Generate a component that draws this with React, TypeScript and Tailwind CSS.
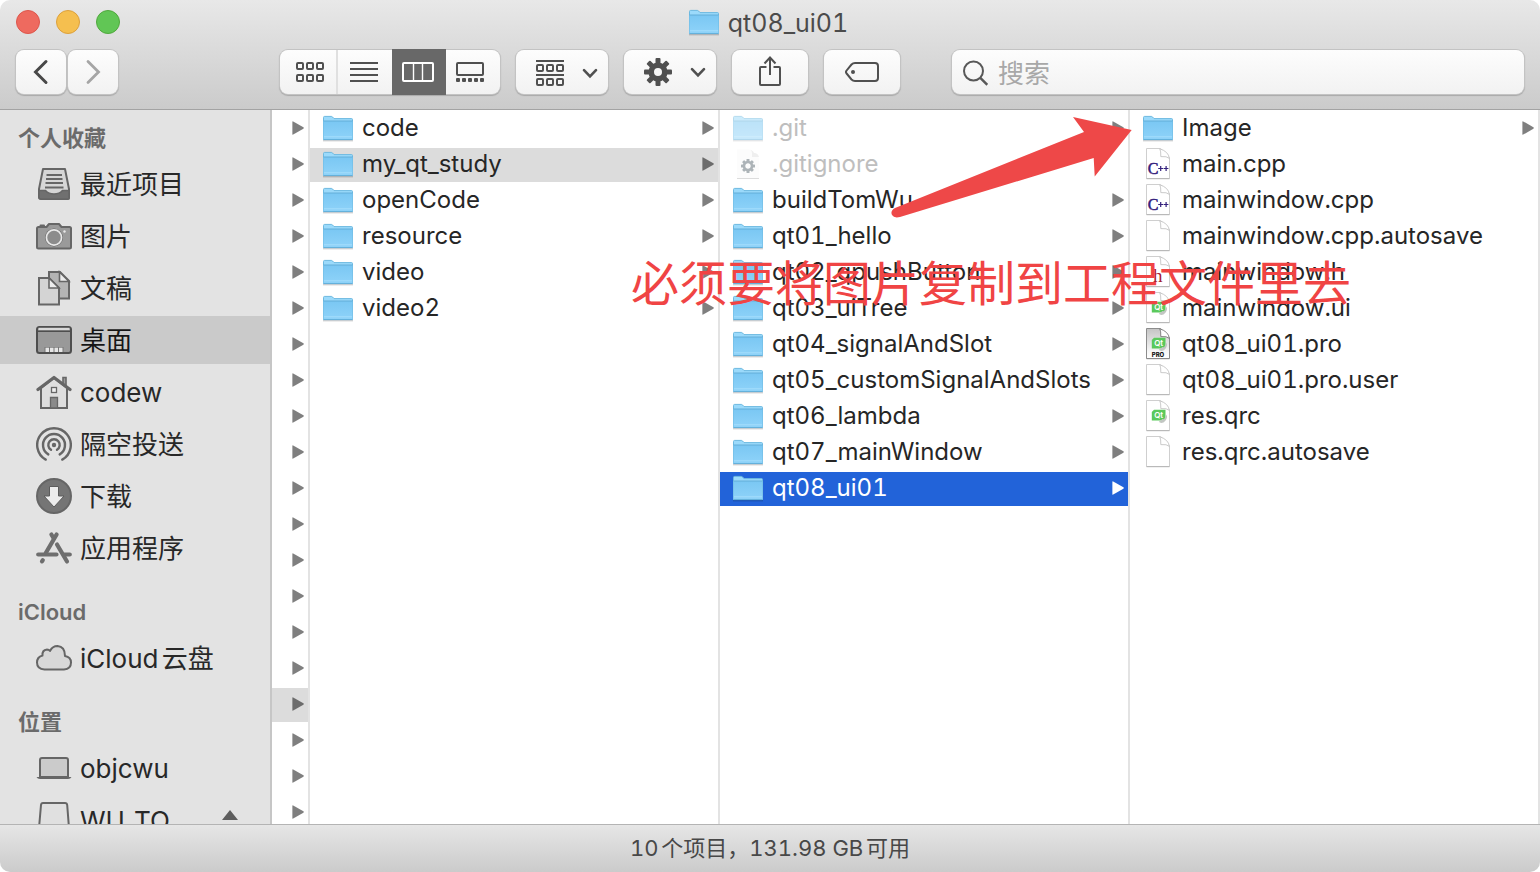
import React from "react";

const ICON_PROPS = { fill: "none", "aria-hidden": true } as const;

function FolderIcon({ faded = false }: { faded?: boolean }) {
  return (
    <svg {...ICON_PROPS} width="32" height="34" viewBox="0 0 32 34" className={faded ? "shrink-0 opacity-50" : "shrink-0"}>
      <defs>
        <linearGradient id="folder-front" x1="0" y1="0" x2="0" y2="1">
          <stop offset="0" stopColor="#7ac7f3" />
          <stop offset="1" stopColor="#8fd3f9" />
        </linearGradient>
      </defs>
      <rect x="1" y="28" width="30" height="1.4" fill="#000" opacity="0.18" />
      <path d="M1.5 27.5V5.5Q1.5 4.4 2.6 4.4H9.2Q10 4.4 10.6 5L12 6.6H29.6Q30.5 6.6 30.5 7.5V27.5Z" fill="#9bdafb" stroke="#6db9e0" strokeWidth="1" />
      <path d="M1.5 9H30.5V27.2Q30.5 28 29.6 28H2.4Q1.5 28 1.5 27.2Z" fill="url(#folder-front)" />
      <path d="M1.5 9H30.5M1.5 27.6H30.5" stroke="#62aed8" strokeWidth="1" />
      <path d="M2 24.8H30" stroke="#a5defc" strokeWidth="1" />
    </svg>
  );
}

type DocKind = "plain" | "cpp" | "header" | "qt" | "pro" | "config";

const GEAR_TEETH = [0, 45, 90, 135, 180, 225, 270, 315];

function DocIcon({ kind }: { kind: DocKind }) {
  if (kind === "config") {
    return (
      <svg {...ICON_PROPS} width="32" height="34" viewBox="0 0 32 34" className="shrink-0">
        <path d="M5 1.5H17L27 10V30H5Z" fill="#fcfcfc" />
        <path d="M17 1.5Q20 2 20 6V9H27Q26 5 22 5Q21 2 17 1.5Z" fill="#efefef" />
        <path d="M5 30.5H27" stroke="#dcdcdc" />
        <g transform="translate(16 18)" fill="#adb4b8">
          {GEAR_TEETH.map((a) => (
            <rect key={a} x="-1.5" y="-7" width="3" height="4" rx="0.6" transform={`rotate(${a})`} />
          ))}
        </g>
        <circle cx="16" cy="18" r="4" stroke="#adb4b8" strokeWidth="2.6" />
      </svg>
    );
  }
  const pro = kind === "pro";
  return (
    <svg {...ICON_PROPS} width="32" height="34" viewBox="0 0 32 34" className="shrink-0">
      <defs>
        <linearGradient id="pro-page" x1="0" y1="0" x2="0" y2="1">
          <stop offset="0" stopColor="#c4c4c4" />
          <stop offset="0.75" stopColor="#f6f6f6" />
          <stop offset="1" stopColor="#ffffff" />
        </linearGradient>
      </defs>
      <path d="M4.5 0.5H18Q20 1 27.5 10V30.5H4.5Z" fill={pro ? "url(#pro-page)" : "#fff"} stroke={pro ? "#8c8c8c" : "#cfcfcf"} />
      <path d="M4.5 30.7H27.5" stroke={pro ? "#8a8a8a" : "#b4b4b4"} />
      <path d="M17.8 0.8Q19 3 18.8 8.6Q25 8 27.4 10.4Q26.5 3.5 17.8 0.8Z" fill="#fff" stroke={pro ? "#777" : "#c4c4c4"} strokeWidth="0.9" />
      {kind === "cpp" && (
        <>
          <text x="5.8" y="26" fontSize="16" fill="#33207c" stroke="#33207c" strokeWidth="0.5" fontFamily="Liberation Serif, serif">C</text>
          <path d="M16.2 20.5H21.2M18.7 18V23M21.8 20.5H26.4M24.1 18V23" stroke="#33207c" strokeWidth="1.2" />
        </>
      )}
      {kind === "header" && (
        <text x="11" y="26" fontSize="19" fill="#a32030" fontFamily="Liberation Serif, serif">h</text>
      )}
      {(kind === "qt" || pro) && (
        <>
          <path d="M12 9.8H23.5V18.5L21.5 20.5H9.8V12Z" fill="#5ac95c" />
          <text x="12.2" y="18.2" fontSize="8" fontWeight="600" fill="#fff" fontFamily="Inter, sans-serif">Qt</text>
          <path d="M24.8 14.5Q26 19 21.5 22.6Q18 23.6 16.8 21.8L20.5 18.9L22 19.2Z" fill="#c2c6c2" />
        </>
      )}
      {pro && (
        <text x="16" y="29" fontSize="6" fontWeight="800" fill="#111" textAnchor="middle" fontFamily="Inter, sans-serif">PRO</text>
      )}
    </svg>
  );
}

function Arrow({ className = "text-[#7f7f7f]" }: { className?: string }) {
  return (
    <svg {...ICON_PROPS} width="12" height="14" viewBox="0 0 12 14" className={`-mt-0.5 shrink-0 ${className}`}>
      <path d="M0.4 0.8Q0.4 0 1.2 0.4L11.4 6.3Q12.2 7 11.4 7.7L1.2 13.6Q0.4 14 0.4 13.2Z" fill="currentColor" />
    </svg>
  );
}

function Chevron() {
  return (
    <svg {...ICON_PROPS} width="16" height="12" viewBox="0 0 16 12">
      <path d="M2 3.2L8 9.4L14 3.2" stroke="#505050" strokeWidth="2.6" strokeLinecap="round" />
    </svg>
  );
}

function Cells({ y }: { y: number }) {
  return (
    <>
      {[1, 11, 21].map((x) => (
        <rect key={x} x={x} y={y} width="6" height="6" rx="1" stroke="#505050" strokeWidth="2" />
      ))}
    </>
  );
}

const SIDE_STROKE = "#666666";

const sideIcons: Record<string, React.ReactNode> = {
  tray: (
    <>
      <path d="M7 3H29L33 23V32Q33 33 32 33H5Q3 33 3 31V23Z" fill="#d6d6d6" stroke={SIDE_STROKE} strokeWidth="2" strokeLinejoin="round" />
      <path d="M3 24.5H9.5Q12.5 28 18 28Q23.5 28 26.5 24.5H33V32Q33 33 32 33H5Q3 33 3 31Z" fill="#707070" stroke={SIDE_STROKE} strokeWidth="1.6" />
      <path d="M10.5 9H26M10 13H26.5M9.5 17H27M9 21.5H27.5" stroke={SIDE_STROKE} strokeWidth="1.8" />
    </>
  ),
  camera: (
    <>
      <path d="M2.5 9H10.5L13 6H23L25.5 9H33.5Q35 9 35 10.5V29Q35 30.5 33.5 30.5H2.5Q1 30.5 1 29V10.5Q1 9 2.5 9Z" fill="#9a9a9a" stroke={SIDE_STROKE} strokeWidth="2" strokeLinejoin="round" />
      <path d="M4.5 7.5H8" stroke={SIDE_STROKE} strokeWidth="2" strokeLinecap="round" />
      <circle cx="18" cy="19.5" r="9" fill={SIDE_STROKE} />
      <circle cx="18" cy="19.5" r="7.6" fill="#8c8c8c" stroke="#e8e8e8" strokeWidth="1.7" />
      <circle cx="28.5" cy="13.5" r="1.2" fill="#e8e8e8" />
    </>
  ),
  docs: (
    <>
      <path d="M13 2H24L33 11V28.5H13Z" fill="#b4b4b4" stroke={SIDE_STROKE} strokeWidth="2" />
      <path d="M23.5 2V11.5H33Z" fill="#ededed" stroke={SIDE_STROKE} strokeWidth="1.6" />
      <path d="M3 8H13L23 18V34.5H3Z" fill="#d4d4d4" stroke={SIDE_STROKE} strokeWidth="2" />
      <path d="M13 8V18H23Z" fill="#ededed" stroke={SIDE_STROKE} strokeWidth="1.6" />
    </>
  ),
  desktop: (
    <>
      <rect x="1" y="5" width="34" height="26" rx="2.5" fill="#999" stroke="#4e4e4e" strokeWidth="2" />
      <path d="M2.5 7H33.5" stroke="#d8d8d8" strokeWidth="2.4" />
      <path d="M1 9.2H35" stroke="#4e4e4e" strokeWidth="1.6" />
      <path d="M9 30V26H27V30Z" fill="#e6e6e6" />
      <path d="M9 25V30M13.5 25V30M18 25V30M22.5 25V30M27 25V30" stroke="#777" strokeWidth="1" />
    </>
  ),
  home: (
    <>
      <path d="M27 10V3.5H30V12" fill="#999" stroke={SIDE_STROKE} strokeWidth="1.6" />
      <path d="M5 14L18 4L31 14V34H5Z" fill="#dedede" stroke={SIDE_STROKE} strokeWidth="2" />
      <path d="M2 15.5L18 3.5L34 15.5" stroke={SIDE_STROKE} strokeWidth="3.2" strokeLinecap="round" strokeLinejoin="round" />
      <rect x="15.5" y="13.5" width="5" height="5" fill="#eee" stroke={SIDE_STROKE} strokeWidth="1.3" />
      <path d="M14.5 34V23.5H21.5V34Z" fill="#8a8a8a" stroke={SIDE_STROKE} strokeWidth="1.3" />
    </>
  ),
  airdrop: (
    <g stroke={SIDE_STROKE} strokeWidth="2.4" strokeLinecap="round">
      <circle cx="18" cy="19" r="2.2" fill={SIDE_STROKE} stroke="none" />
      <path d="M15 23.8A5.700 5.700 0 1 1 21 23.8" />
      <path d="M12.3 28.4A11 11 0 1 1 23.7 28.4" />
      <path d="M9.7 33.6A16.800 16.800 0 1 1 26.3 33.6" />
    </g>
  ),
  download: (
    <>
      <circle cx="18" cy="18" r="17" fill="#757575" stroke={SIDE_STROKE} strokeWidth="2" />
      <path d="M13.5 8.5H22.5V18H28L18 29L8 18H13.5Z" fill="#ececec" stroke="#5c5c5c" strokeWidth="1" />
    </>
  ),
  apps: (
    <g stroke="#6e6e6e" strokeWidth="4.2" strokeLinecap="round">
      <path d="M2.2 24.5H20.5M28.5 24.5H33.8" />
      <path d="M20.6 4.5L9.8 23" />
      <path d="M15.4 4.5L17.5 8" />
      <path d="M21 14.5L31 31.5" />
      <path d="M6 31.4L6.8 30.2" />
    </g>
  ),
  cloud: (
    <path d="M8.5 29.5Q1 29 1 22.5Q1 17 6.5 15.5Q6 10 11 9.5Q13 9.5 14 11Q16.5 6 21.5 6Q29 6.5 29 16Q35 17 35 22.5Q35 29 28 29.5Z" fill="#d8d8d8" stroke={SIDE_STROKE} strokeWidth="2" strokeLinejoin="round" />
  ),
  laptop: (
    <>
      <path d="M4 27V10Q4 8 6 8H30Q32 8 32 10V27Z" fill="#cbcbcb" stroke={SIDE_STROKE} strokeWidth="2" />
      <path d="M0.5 27H35.5Q34.5 29 32 29H4Q1.5 29 0.5 27Z" fill={SIDE_STROKE} />
    </>
  ),
  drive: (
    <path d="M3 26L5 3Q5.2 1 7 1H29Q31 1 31.2 3L33 26V34H3Z" fill="#e0e0e0" stroke={SIDE_STROKE} strokeWidth="2" />
  ),
};

type SideItem = { icon: string; label: string; active?: boolean; eject?: boolean };

const sections: { title: string; items: SideItem[] }[] = [
  {
    title: "个人收藏",
    items: [
      { icon: "tray", label: "最近项目" },
      { icon: "camera", label: "图片" },
      { icon: "docs", label: "文稿" },
      { icon: "desktop", label: "桌面", active: true },
      { icon: "home", label: "codew" },
      { icon: "airdrop", label: "隔空投送" },
      { icon: "download", label: "下载" },
      { icon: "apps", label: "应用程序" },
    ],
  },
  { title: "iCloud", items: [{ icon: "cloud", label: "iCloud云盘" }] },
  {
    title: "位置",
    items: [
      { icon: "laptop", label: "objcwu" },
      { icon: "drive", label: "WU_TO", eject: true },
    ],
  },
];

function Sidebar() {
  return (
    <nav aria-label="边栏" className="flex w-[272px] shrink-0 flex-col gap-[26px] overflow-hidden border-r-2 border-[#c6c6c6] bg-[#e3e3e3] pt-3.5">
      {sections.map((section) => (
        <section key={section.title} className="shrink-0">
          <h2 className="mb-2 pl-[18px] text-[22px] leading-7 font-semibold text-[#6b6b6b]">{section.title}</h2>
          <ul className="flex flex-col gap-1">
            {section.items.map((item) => (
              <li key={item.label}>
                <button
                  type="button"
                  className={`flex h-12 w-full items-center gap-2 pr-8 pl-9 text-left text-[26px] leading-8 ${item.active ? "bg-[#cacaca] text-[#161616]" : "text-[#282828]"}`}
                >
                  <svg {...ICON_PROPS} width="36" height="36" viewBox="0 0 36 36" className="shrink-0">
                    {sideIcons[item.icon]}
                  </svg>
                  <span className="grow pt-0.5">{item.label}</span>
                  {item.eject && (
                    <svg {...ICON_PROPS} width="16" height="20" viewBox="0 0 16 20" className="shrink-0">
                      <path d="M8 0L16 10H0ZM0 15H16V18H0Z" fill="#5e5e5e" />
                    </svg>
                  )}
                </button>
              </li>
            ))}
          </ul>
        </section>
      ))}
    </nav>
  );
}

type Entry = { name: string; kind?: DocKind; hidden?: boolean; state?: "path" | "active" };

const homeFolders: Entry[] = [
  { name: "code" },
  { name: "my_qt_study", state: "path" },
  { name: "openCode" },
  { name: "resource" },
  { name: "video" },
  { name: "video2" },
];

const studyFolders: Entry[] = [
  { name: ".git", hidden: true },
  { name: ".gitignore", kind: "config", hidden: true },
  { name: "buildTomWu" },
  { name: "qt01_hello" },
  { name: "qt02_qpushButton" },
  { name: "qt03_uiTree" },
  { name: "qt04_signalAndSlot" },
  { name: "qt05_customSignalAndSlots" },
  { name: "qt06_lambda" },
  { name: "qt07_mainWindow" },
  { name: "qt08_ui01", state: "active" },
];

const projectFiles: Entry[] = [
  { name: "Image" },
  { name: "main.cpp", kind: "cpp" },
  { name: "mainwindow.cpp", kind: "cpp" },
  { name: "mainwindow.cpp.autosave", kind: "plain" },
  { name: "mainwindow.h", kind: "header" },
  { name: "mainwindow.ui", kind: "qt" },
  { name: "qt08_ui01.pro", kind: "pro" },
  { name: "qt08_ui01.pro.user", kind: "plain" },
  { name: "res.qrc", kind: "qt" },
  { name: "res.qrc.autosave", kind: "plain" },
];

function rowColors(entry: Entry) {
  if (entry.state === "active") return "bg-[#2263d9] text-white";
  if (entry.state === "path") return "bg-[#dcdcdc] text-[#262626]";
  return entry.hidden ? "text-[#bebebe]" : "text-[#262626]";
}

function Column({ entries }: { entries: Entry[] }) {
  return (
    <ul className="flex min-w-0 flex-1 flex-col gap-0.5 overflow-hidden border-r-2 border-[#e3e3e3] pt-0.5">
      {entries.map((entry) => (
        <li key={entry.name}>
          <button type="button" className={`flex h-[34px] w-full items-center pr-1 pl-3 text-left text-[24px] leading-8 ${rowColors(entry)}`}>
            {entry.kind ? <DocIcon kind={entry.kind} /> : <FolderIcon faded={entry.hidden} />}
            <span className="grow truncate pb-0.5 pl-2">{entry.name}</span>
            {!entry.kind && (
              <Arrow className={entry.state === "active" ? "text-white" : entry.state === "path" ? "text-[#6c6c6c]" : "text-[#7f7f7f]"} />
            )}
          </button>
        </li>
      ))}
    </ul>
  );
}

const PARENT_ROWS = Array.from({ length: 20 }, (_, i) => i);

function ParentStrip() {
  return (
    <ul className="flex w-[38px] shrink-0 flex-col gap-0.5 overflow-hidden border-r-2 border-[#e3e3e3] pt-0.5">
      {PARENT_ROWS.map((row) => (
        <li key={row} className={`flex h-[34px] shrink-0 items-center justify-end pr-1 ${row === 16 ? "bg-[#dcdcdc]" : ""}`}>
          <Arrow className={row === 16 ? "text-[#6c6c6c]" : "text-[#7f7f7f]"} />
        </li>
      ))}
    </ul>
  );
}

const KEY = "flex h-11 items-center justify-center rounded-lg bg-linear-to-b from-[#fdfdfd] to-[#f2f2f2] shadow-[0_0_0_1px_#c3c3c3,0_1px_1px_1px_#a9a9a9]";

function Toolbar() {
  return (
    <div className="flex items-center px-4 pt-1.5">
      <div className="flex gap-0.5">
        <button type="button" aria-label="后退" className={`${KEY} w-[50px]`}>
          <svg {...ICON_PROPS} width="16" height="26" viewBox="0 0 16 26">
            <path d="M13 2.5L2.5 13L13 23.5" stroke="#484848" strokeWidth="3" strokeLinecap="round" />
          </svg>
        </button>
        <button type="button" aria-label="前进" className={`${KEY} w-[50px]`}>
          <svg {...ICON_PROPS} width="16" height="26" viewBox="0 0 16 26">
            <path d="M3 2.5L13.5 13L3 23.5" stroke="#a5a5a5" strokeWidth="2.8" strokeLinecap="round" />
          </svg>
        </button>
      </div>
      <div className={`${KEY} ml-[162px]`}>
        <button type="button" aria-label="图标" className="flex h-full w-[58px] items-center justify-center border-r-2 border-[#e0e0e0] pl-1">
          <svg {...ICON_PROPS} width="28" height="20" viewBox="0 0 28 20">
            <Cells y={1} />
            <Cells y={13} />
          </svg>
        </button>
        <button type="button" aria-label="列表" className="flex h-full w-[54px] items-center justify-center pr-0.5">
          <svg {...ICON_PROPS} width="28" height="20" viewBox="0 0 28 20">
            <path d="M0 1H28M0 7H28M0 13H28M0 19H28" stroke="#505050" strokeWidth="2" />
          </svg>
        </button>
        <button type="button" aria-label="分栏" className="flex h-[46px] w-[54px] items-center justify-center bg-[#686868] pr-0.5">
          <svg {...ICON_PROPS} width="32" height="20" viewBox="0 0 32 20">
            <rect x="1" y="1" width="30" height="18" rx="1" stroke="#fff" strokeWidth="2" />
            <path d="M11.5 1V19M20.5 1V19" stroke="#fff" strokeWidth="1.4" />
          </svg>
        </button>
        <button type="button" aria-label="画廊" className="flex h-full w-[54px] items-center justify-center pr-1.5">
          <svg {...ICON_PROPS} width="28" height="20" viewBox="0 0 28 20">
            <rect x="1" y="1" width="26" height="12" rx="1" stroke="#505050" strokeWidth="2" />
            {[0, 6, 12, 18, 24].map((x) => (
              <rect key={x} x={x} y="16" width="4" height="4" rx="1" fill="#505050" />
            ))}
          </svg>
        </button>
      </div>
      <button type="button" aria-label="群组" className={`${KEY} ml-4 w-[92px] gap-[18px] pt-0.5 pl-2.5`}>
        <svg {...ICON_PROPS} width="28" height="26" viewBox="0 0 28 26">
          <path d="M0 1H28M0 15H28" stroke="#505050" strokeWidth="2" />
          <Cells y={5} />
          <Cells y={19} />
        </svg>
        <Chevron />
      </button>
      <button type="button" aria-label="操作" className={`${KEY} ml-4 w-[92px] gap-[18px] pl-2.5`}>
        <svg {...ICON_PROPS} width="28" height="28" viewBox="-14 -14 28 28">
          {GEAR_TEETH.map((a) => (
            <rect key={a} x="-2.5" y="-14" width="5" height="7" rx="1" fill="#505050" transform={`rotate(${a})`} />
          ))}
          <circle r="6.8" stroke="#505050" strokeWidth="5.6" />
        </svg>
        <Chevron />
      </button>
      <button type="button" aria-label="共享" className={`${KEY} ml-4 w-[76px]`}>
        <svg {...ICON_PROPS} width="24" height="32" viewBox="0 0 24 32">
          <path d="M8.5 11H3Q2 11 2 12V28Q2 29 3 29H21Q22 29 22 28V12Q22 11 21 11H15.5" stroke="#505050" strokeWidth="2" />
          <path d="M12 19V2M6.5 7.5L12 1.5L17.5 7.5" stroke="#505050" strokeWidth="2" />
        </svg>
      </button>
      <button type="button" aria-label="标签" className={`${KEY} ml-4 w-[76px]`}>
        <svg {...ICON_PROPS} width="34" height="20" viewBox="0 0 34 20">
          <path d="M10 1H30Q33 1 33 4V16Q33 19 30 19H10Q8 19 6.5 17.5L1.6 11.5Q0.4 10 1.6 8.5L6.5 2.5Q8 1 10 1Z" stroke="#505050" strokeWidth="2" />
          <circle cx="8" cy="10" r="2" fill="#505050" />
        </svg>
      </button>
      <label className={`${KEY} ml-[52px] min-w-0 grow gap-2.5 px-2.5 pt-0.5`}>
        <svg {...ICON_PROPS} width="26" height="26" viewBox="0 0 26 26" className="shrink-0">
          <circle cx="11.5" cy="11" r="9.5" stroke="#585858" strokeWidth="2" />
          <path d="M18.3 17.8L25.3 24.8" stroke="#585858" strokeWidth="2.4" />
        </svg>
        <input type="text" aria-label="搜索" placeholder="搜索" className="min-w-0 grow bg-transparent pt-0.5 text-[26px] leading-8 text-[#282828] outline-none placeholder:text-[#a8a8a8]" />
      </label>
    </div>
  );
}

function Annotation() {
  return (
    <div className="pointer-events-none absolute inset-0">
      <svg {...ICON_PROPS} width="244" height="104" viewBox="890 115 244 104" className="absolute top-[115px] left-[890px]">
        <path d="M1131.7 130L1073 117L1084 132L895 208Q890 211 892 215Q894 218.5 900 217L1093.7 158L1094.7 176.5Z" fill="#ee4848" />
      </svg>
      <p className="absolute top-[252px] left-[631px] text-[48px] leading-[64px] whitespace-nowrap text-[#f04444]">必须要将图片复制到工程文件里去</p>
    </div>
  );
}

export default function App() {
  return (
    <div className="relative flex h-screen flex-col overflow-hidden rounded-[10px] bg-white font-['Inter','Noto_Sans_CJK_SC',sans-serif] tabular-nums [text-autospace:normal]">
      <header className="h-[110px] shrink-0 border-b border-[#a3a3a3] bg-linear-to-b from-[#e8e8e8] to-[#cbcbcb]">
        <div className="flex h-11 items-center px-4">
          <div className="flex flex-1 gap-4">
            <button type="button" aria-label="关闭" className="size-6 rounded-full border border-[#dd564c] bg-[#ee6a5f]" />
            <button type="button" aria-label="最小化" className="size-6 rounded-full border border-[#dca03c] bg-[#f5bf4f]" />
            <button type="button" aria-label="缩放" className="size-6 rounded-full border border-[#50a83d] bg-[#61c655]" />
          </div>
          <h1 className="flex items-center gap-2 pt-0.5 pr-1 text-[25px] leading-8 text-[#4b4b4b]">
            <FolderIcon />
            qt08_ui01
          </h1>
          <div className="flex-1" />
        </div>
        <Toolbar />
      </header>
      <main className="flex min-h-0 flex-1">
        <Sidebar />
        <ParentStrip />
        <Column entries={homeFolders} />
        <Column entries={studyFolders} />
        <Column entries={projectFiles} />
      </main>
      <footer className="flex h-12 shrink-0 items-center justify-center border-t border-[#b4b4b4] bg-linear-to-b from-[#e6e6e6] to-[#cbcbcb] pb-0.5 text-[22px] leading-7 text-[#484848]">
        10个项目，131.98 GB可用
      </footer>
      <Annotation />
    </div>
  );
}
